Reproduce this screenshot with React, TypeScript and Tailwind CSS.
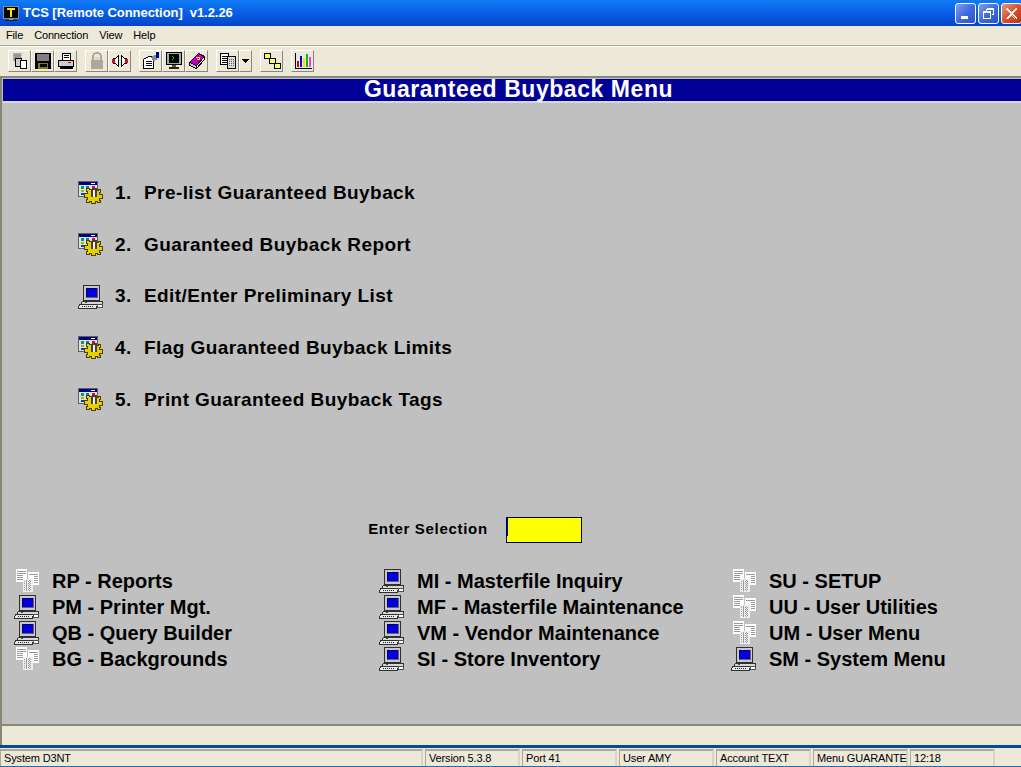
import type { ReactNode } from 'react'

const ui = "font-['Liberation_Sans',Arial,sans-serif]"

function AppIcon() {
  return (
    <svg width="18" height="18" viewBox="0 0 18 18" shapeRendering="crispEdges">
      <rect x="1.500" y="2.500" width="15" height="12" fill="#000" stroke="#8a8a8a" />
      <path d="M5 4h8v2h-3v7H8V6H5z" fill="#ffe800" />
      <rect x="7" y="15" width="4" height="1" fill="#999" />
      <rect x="3" y="16" width="12" height="1" fill="#222" />
    </svg>
  )
}

function WinButton({ kind }: { kind: 'min' | 'max' | 'close' }) {
  const bg =
    kind === 'close'
      ? 'bg-gradient-to-br from-[#e8957a] via-[#d9502a] to-[#b83410]'
      : 'bg-gradient-to-br from-[#7e9ff0] via-[#3f6be0] to-[#2a50cc]'
  return (
    <div className={`flex h-[21px] w-[21px] items-center justify-center rounded-[3px] border border-white ${bg}`}>
      <svg width="15" height="15" viewBox="0 0 15 15" shapeRendering="crispEdges">
        {kind === 'min' && <rect x="3" y="10" width="7" height="3" fill="#fff" />}
        {kind === 'max' && (
          <path
            d="M5.500 2.500h7v6h-2M5.500 2.500v2M2.500 5.500h7v7h-7z M2.500 6.500h7 M5.500 3.500h7"
            fill="none"
            stroke="#fff"
          />
        )}
        {kind === 'close' && (
          <path d="M3 2l4.500 4.500L12 2l1 1-4.500 4.500L13 12l-1 1-4.500-4.500L3 13l-1-1 4.500-4.500L2 3z" fill="#fff" stroke="#fff" strokeWidth="0.6" />
        )}
      </svg>
    </div>
  )
}

function ToolButton({ children, w = 'w-[23px]', ml = 'ml-0' }: { children: ReactNode; w?: string; ml?: string }) {
  return (
    <div
      className={`flex h-[22px] items-center justify-center border-t border-l border-t-white border-l-white border-r border-b border-r-[#8a8778] border-b-[#8a8778] bg-[#ece9d8] ${w} ${ml}`}
    >
      {children}
    </div>
  )
}

const Svg = ({ children }: { children: ReactNode }) => (
  <svg width="18" height="18" viewBox="0 0 18 18" shapeRendering="crispEdges">
    {children}
  </svg>
)

function Toolbar() {
  return (
    <div className="flex h-[27px] items-center pl-2">
      <ToolButton>
        <Svg>
          <path d="M2 1h8v8H2z" fill="#999" stroke="#bbb" strokeDasharray="1 1" />
          <rect x="4.500" y="6.500" width="6" height="8" fill="#ccc" stroke="#000" />
          <rect x="9.500" y="8.500" width="6" height="8" fill="#fff" stroke="#000" />
        </Svg>
      </ToolButton>
      <ToolButton>
        <Svg>
          <rect x="1" y="1" width="16" height="16" fill="#000" />
          <rect x="3" y="2" width="12" height="7" fill="#808080" />
          <rect x="4" y="11" width="10" height="6" fill="#808000" />
          <rect x="6" y="12" width="7" height="3" fill="#000" />
        </Svg>
      </ToolButton>
      <ToolButton>
        <Svg>
          <rect x="5.500" y="1.500" width="8" height="7" fill="#fff" stroke="#000" />
          <path d="M7 3h5M7 5h5" stroke="#000" />
          <rect x="1.500" y="8.500" width="15" height="6" fill="#ccc" stroke="#000" />
          <rect x="11" y="10" width="3" height="1" fill="#e00000" />
          <rect x="3" y="15" width="13" height="2" fill="#000" />
        </Svg>
      </ToolButton>
      <ToolButton ml="ml-2">
        <Svg>
          <path d="M5 8V5a4 4 0 018 0v3" fill="none" stroke="#aca899" strokeWidth="2" />
          <rect x="3" y="8" width="12" height="9" fill="#aca899" />
          <rect x="7" y="5" width="4" height="3" fill="#d8d5c4" />
        </Svg>
      </ToolButton>
      <ToolButton>
        <Svg>
          <path d="M2.500 6.500h2l3-3v11l-3-3h-2z" fill="#fff" stroke="#000" />
          <path d="M15.500 6.500h-2l-3-3v11l3-3h2z" fill="#fff" stroke="#000" />
          <rect x="1" y="7" width="3" height="4" fill="#d01010" />
          <rect x="14" y="7" width="3" height="4" fill="#d01010" />
        </Svg>
      </ToolButton>
      <ToolButton ml="ml-2">
        <Svg>
          <path d="M1.500 7.500l5-3h5v12h-10z" fill="#fff" stroke="#000" />
          <path d="M4 9h6M4 11h6M4 13h6" stroke="#000" />
          <path d="M9 5l6-3v6l-4 1z" fill="#8088a0" />
          <rect x="14" y="0" width="3" height="6" fill="#00008b" />
        </Svg>
      </ToolButton>
      <ToolButton>
        <Svg>
          <rect x="1.500" y="0.500" width="15" height="12" fill="#a8a8a8" stroke="#000" />
          <rect x="4" y="2" width="10" height="9" fill="#000" />
          <path d="M7 4l2 2-2 2" fill="none" stroke="#00e000" />
          <rect x="7" y="13" width="4" height="2" fill="#555" />
          <rect x="4" y="15" width="10" height="2" fill="#222" />
        </Svg>
      </ToolButton>
      <ToolButton>
        <Svg>
          <path d="M1.500 10.500L10.500 1.500l6 3-8 9z" fill="#c000c0" stroke="#300030" />
          <path d="M1.500 10.500l7 3v3l-7-3z" fill="#c8c8c8" stroke="#000" />
          <path d="M16.500 4.500v3l-8 9" fill="none" stroke="#000" />
          <path d="M8 5h3v2H9v1" fill="none" stroke="#ffe800" />
        </Svg>
      </ToolButton>
      <ToolButton ml="ml-2">
        <Svg>
          <rect x="1.500" y="1.500" width="8" height="11" fill="#fff" stroke="#000" />
          <path d="M3 4h5M3 6h5M3 8h5M3 10h5" stroke="#000" />
          <rect x="8.500" y="4.500" width="8" height="12" fill="#ddd" stroke="#000" />
          <path d="M10 7h5M10 9h5M10 11h5M10 13h5" stroke="#555" strokeDasharray="1 1" />
        </Svg>
      </ToolButton>
      <ToolButton w="w-[13px]">
        <svg width="7" height="4" viewBox="0 0 7 4" shapeRendering="crispEdges">
          <path d="M0 0h7L3.500 4z" fill="#000" />
        </svg>
      </ToolButton>
      <ToolButton ml="ml-2">
        <Svg>
          <rect x="1.500" y="1.500" width="6" height="5" fill="#ffff60" stroke="#000" />
          <rect x="6.500" y="6.500" width="6" height="5" fill="#ffff60" stroke="#000" />
          <rect x="11.500" y="11.500" width="6" height="5" fill="#ffff60" stroke="#000" />
        </Svg>
      </ToolButton>
      <ToolButton ml="ml-2">
        <Svg>
          <path d="M1.500 1v15h16" fill="none" stroke="#000" />
          <rect x="3" y="9" width="2" height="6" fill="#e00000" />
          <rect x="6" y="4" width="2" height="11" fill="#0000e0" />
          <rect x="9" y="6" width="2" height="9" fill="#e8e800" />
          <rect x="12" y="2" width="2" height="13" fill="#00c000" />
          <rect x="15" y="5" width="2" height="10" fill="#ff30ff" />
        </Svg>
      </ToolButton>
    </div>
  )
}

function GearWindowIcon() {
  return (
    <svg width="26" height="24" viewBox="0 0 26 24" shapeRendering="crispEdges">
      <rect x="0.500" y="0.500" width="19" height="15" fill="#e0e0e0" stroke="#606060" />
      <rect x="1" y="1" width="18" height="3" fill="#000080" />
      <rect x="13" y="2" width="4" height="1" fill="#fff" />
      <rect x="3" y="5" width="3" height="3" fill="#00a060" />
      <rect x="8" y="5" width="3" height="3" fill="#0080c0" />
      <rect x="14" y="5" width="3" height="3" fill="#e00060" />
      <rect x="3" y="9" width="3" height="2" fill="#b0b000" />
      <rect x="8" y="9" width="3" height="2" fill="#00a060" />
      <rect x="3" y="12" width="3" height="2" fill="#0040c0" />
      <path
        d="M14.500 7.500h4v2h2v-1h2v3h-1v2h3v4h-3v2h1v2h-3v-1h-2v2h-4v-2h-2v1h-3v-3h1v-2h-3v-4h3v-2h-1v-3h3v1h2z"
        fill="#e8d000"
        stroke="#4a4200"
      />
      <rect x="13" y="8" width="6" height="8" fill="#404040" />
      <rect x="15" y="9" width="2" height="7" fill="#f0f0f0" />
    </svg>
  )
}

function PcIcon() {
  return (
    <svg width="26" height="24" viewBox="0 0 26 24" shapeRendering="crispEdges">
      <rect x="5.500" y="0.500" width="16" height="15" fill="#c8c8c8" stroke="#303030" />
      <rect x="8" y="3" width="11" height="9" fill="#0000e0" stroke="#000" strokeWidth="0.5" />
      <path d="M4.500 16.500h20v3h-22z" fill="#d8d8d8" stroke="#303030" />
      <path d="M1.500 19.500h18l-1 3.500h-18z" fill="#e8e8e8" stroke="#303030" />
      <path d="M4 21h12" stroke="#202020" strokeDasharray="1 1" />
      <rect x="19.500" y="19.500" width="5" height="3" fill="#fff" stroke="#505050" />
      <rect x="7" y="17" width="2" height="1" fill="#008000" />
    </svg>
  )
}

function DocsIcon() {
  return (
    <svg width="26" height="24" viewBox="0 0 26 24" shapeRendering="crispEdges">
      <rect x="2" y="0" width="11" height="13" fill="#fff" />
      <path d="M3 2h9M3 4h9M3 6h6M3 8h6M3 10h8" stroke="#9a9a9a" />
      <rect x="14" y="3" width="11" height="13" fill="#fff" />
      <path d="M15 5h9M20 7h4M20 9h4M20 11h4M20 13h4" stroke="#9a9a9a" />
      <rect x="9" y="10" width="10" height="13" fill="#eee" />
      <path d="M10 12h8M10 14h8M10 16h8M10 18h8M10 20h8M12 11v11M15 11v11" stroke="#9a9a9a" strokeDasharray="1 1" />
    </svg>
  )
}

const mainItems = [
  { n: '1.', label: 'Pre-list Guaranteed Buyback', icon: 'gear' },
  { n: '2.', label: 'Guaranteed Buyback Report', icon: 'gear' },
  { n: '3.', label: 'Edit/Enter Preliminary List', icon: 'pc' },
  { n: '4.', label: 'Flag Guaranteed Buyback Limits', icon: 'gear' },
  { n: '5.', label: 'Print Guaranteed Buyback Tags', icon: 'gear' },
]

const shortcuts = [
  {
    w: 'w-[365px]',
    rows: [
      ['docs', 'RP - Reports'],
      ['pc', 'PM - Printer Mgt.'],
      ['pc', 'QB - Query Builder'],
      ['docs', 'BG - Backgrounds'],
    ],
  },
  {
    w: 'w-[352px]',
    rows: [
      ['pc', 'MI - Masterfile Inquiry'],
      ['pc', 'MF - Masterfile Maintenance'],
      ['pc', 'VM - Vendor Maintenance'],
      ['pc', 'SI - Store Inventory'],
    ],
  },
  {
    w: 'w-[280px]',
    rows: [
      ['docs', 'SU - SETUP'],
      ['docs', 'UU - User Utilities'],
      ['docs', 'UM - User Menu'],
      ['pc', 'SM - System Menu'],
    ],
  },
]

const statusCells = [
  { w: 'w-[423px]', text: 'System D3NT' },
  { w: 'w-[95px]', text: 'Version 5.3.8' },
  { w: 'w-[95px]', text: 'Port 41' },
  { w: 'w-[95px]', text: 'User AMY' },
  { w: 'w-[95px]', text: 'Account TEXT' },
  { w: 'w-[95px]', text: 'Menu GUARANTE' },
  { w: 'w-[85px]', text: '12:18' },
]

export default function App() {
  return (
    <div className={`flex h-[767px] w-[1021px] flex-col overflow-hidden bg-[#ece9d8] text-black ${ui}`}>
      {/* title bar */}
      <div className="flex h-[26px] items-center bg-gradient-to-b from-[#0f7cf5] via-[#0a5ee6] to-[#0345c8] pl-[2px]">
        <AppIcon />
        <span className="ml-[3px] whitespace-pre text-[13px] font-bold tracking-[-0.06px] text-white">
          TCS [Remote Connection]  v1.2.26
        </span>
        <div className="ml-auto mr-[-1px] flex gap-[2px]">
          <WinButton kind="min" />
          <WinButton kind="max" />
          <WinButton kind="close" />
        </div>
      </div>

      {/* menu */}
      <div className="flex h-[19px] items-center gap-[11px] pl-[6px] text-[11px] tracking-[-0.15px]">
        <span>File</span>
        <span>Connection</span>
        <span>View</span>
        <span>Help</span>
      </div>
      <div className="h-[2px] border-t border-t-[#aca899] border-b border-b-white" />

      <Toolbar />

      {/* client area */}
      <div className="mt-[2px] flex min-h-0 flex-1 flex-col border-t-2 border-l-2 border-t-[#8a8778] border-l-[#8a8778] bg-[#c0c0c0]">
        <div className="ml-px mt-px flex h-[24px] shrink-0 items-center justify-center border-b-2 border-b-[#d8d8d8] bg-[#000099] pb-[2px] pl-[13px] text-[23px] font-bold leading-none tracking-[0.55px] text-white">
          Guaranteed Buyback Menu
        </div>

        <div className="flex flex-col gap-[27.700px] pl-[76px] pt-[78.300px]">
          {mainItems.map((item) => (
            <div key={item.n} className="flex h-[24px] items-center">
              <div className="w-[37px] shrink-0">{item.icon === 'gear' ? <GearWindowIcon /> : <PcIcon />}</div>
              <span className="w-[29px] shrink-0 text-[19px] font-bold tracking-[0.42px]">{item.n}</span>
              <span className="whitespace-nowrap text-[19px] font-bold tracking-[0.42px]">{item.label}</span>
            </div>
          ))}
        </div>

        <div className="mt-[105px] flex items-center justify-center pr-[73px]">
          <span className="mb-[2px] text-[15px] font-bold tracking-[0.7px]">Enter Selection</span>
          <div className="ml-[18px] h-[26px] w-[76px] border border-[#000033] bg-[#ffff00]">
            <div className="h-[18px] w-px bg-[#0000c0]" />
          </div>
        </div>

        <div className="mt-[25px] flex pl-[12px]">
          {shortcuts.map((col) => (
            <div key={col.rows[0][1]} className={`flex shrink-0 flex-col ${col.w}`}>
              {col.rows.map(([icon, label]) => (
                <div key={label} className="flex h-[26px] items-center">
                  <div className="w-[38px] shrink-0">{icon === 'pc' ? <PcIcon /> : <DocsIcon />}</div>
                  <span className="whitespace-nowrap text-[20px] font-bold">{label}</span>
                </div>
              ))}
            </div>
          ))}
        </div>
      </div>

      {/* message strip */}
      <div className="h-[21px] shrink-0 border-t-2 border-l-2 border-t-[#8a8778] border-l-[#8a8778] bg-[#ece9d8]" />
      <div className="h-[3px] shrink-0 bg-[#044a96]" />

      {/* status bar */}
      <div className="flex h-[19px] shrink-0 gap-[2px] border-b border-b-[#2a6ab0] pt-px">
        {statusCells.map((cell) => (
          <div
            key={cell.text}
            className={`flex shrink-0 items-center whitespace-nowrap border-t-2 border-r-2 border-l border-t-[#aca899] border-r-[#d8d5c4] border-l-[#aca899] pl-[3px] text-[11px] tracking-[-0.15px] ${cell.w}`}
          >
            {cell.text}
          </div>
        ))}
      </div>
    </div>
  )
}
